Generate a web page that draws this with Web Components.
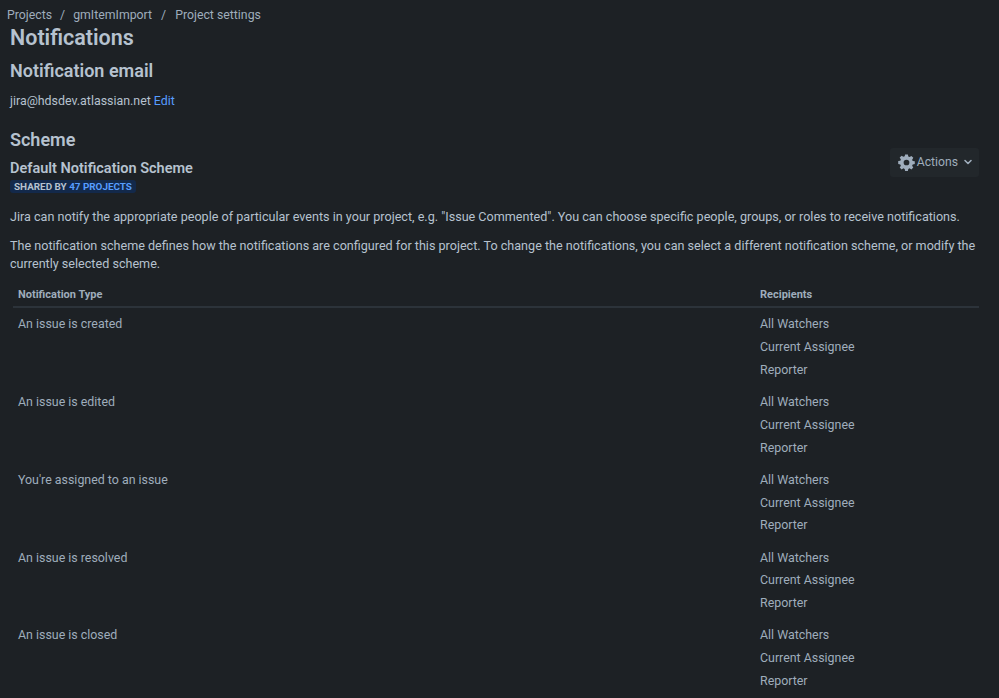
<!DOCTYPE html>
<html><head><meta charset="utf-8"><style>
html,body{margin:0;padding:0;background:#1d2125;color:#b6c2cf;font:12.6px/18px Roboto,sans-serif;height:698px;overflow:hidden}
</style></head><body>
<template id="t-bc"><style>
:host{display:flex;align-items:center;height:19px;padding:5px 0 0 7px;font-size:12.3px;color:#9fadbc}
</style><slot></slot></template>
<template id="t-head"><style>
:host{display:flex;justify-content:space-between;align-items:flex-start}
</style><div><slot></slot></div><slot name="side"></slot></template>
<template id="t-badge"><style>
:host{display:flex;width:fit-content;align-items:center;height:13px;margin-top:1px;padding:0 4px;background:#13294b;border-radius:3px;font-size:9.9px;line-height:13px;font-weight:700;color:#b6c2cf;text-transform:uppercase}
</style><slot></slot></template>
<template id="t-btn"><style>
:host{display:inline-flex;align-items:center;height:29px;box-sizing:border-box;padding:0 5px 0 8px;background:#22272b;border-radius:3px;color:#9fadbc;font-size:12.2px;gap:2px}
svg{display:block}
</style><svg width="17" height="17" viewBox="0 0 16 16"><path fill="#9fadbc" fill-rule="evenodd" d="M6.7.4h2.6l.4 2 1.2.5 1.7-1.1 1.8 1.8-1.1 1.7.5 1.2 2 .4v2.6l-2 .4-.5 1.2 1.1 1.7-1.8 1.8-1.7-1.1-1.2.5-.4 2H6.7l-.4-2-1.2-.5-1.7 1.1-1.8-1.8 1.1-1.7-.5-1.2-2-.4V6.7l2-.4.5-1.2-1.1-1.7 1.8-1.8 1.7 1.1 1.2-.5zM8 5.3a2.7 2.7 0 1 0 0 5.4 2.7 2.7 0 0 0 0-5.4z"/></svg><slot></slot><svg width="12" height="12" viewBox="0 0 12 12" style="margin-left:2px"><path d="M3 4.5 6 7.5 9 4.5" fill="none" stroke="#9fadbc" stroke-width="1.6" stroke-linecap="round" stroke-linejoin="round"/></svg></template>
<template id="t-table"><style>
:host{display:block;margin:11px 20px 0 13px}
.h{display:grid;grid-template-columns:742px 1fr;height:24px;align-items:center;border-bottom:2px solid #2c333a;padding-left:5px;font-size:11px;font-weight:700;color:#9fadbc;box-sizing:border-box}
</style><div class="h"><div>Notification Type</div><div>Recipients</div></div><slot></slot></template>
<template id="t-row"><style>
:host{display:grid;grid-template-columns:742px 1fr;padding:5.3px 0 0 5px;height:77.75px;box-sizing:border-box;line-height:22.75px;color:#9fadbc;font-size:12.4px}
</style><div><slot name="type"></slot></div><div><div>All Watchers</div><div>Current Assignee</div><div>Reporter</div></div></template>
<app-breadcrumbs>Projects<span style="margin:0 8px">/</span>gmItemImport<span style="margin:0 9px">/</span>Project settings</app-breadcrumbs>
<app-page>
<div style="padding:0 20px 0 10px">
<h1 style="font-size:21.5px;line-height:28px;margin:0;font-weight:600;color:#b6c2cf">Notifications</h1>
<h2 style="font-size:18px;line-height:24px;margin:7px 0 0;font-weight:600;color:#b6c2cf">Notification email</h2>
<p style="margin:8px 0 0;line-height:20px;font-size:12.4px;color:#b6c2cf">jira@hdsdev.atlassian.net <a style="color:#579dff">Edit</a></p>
<h2 style="font-size:18px;line-height:24px;margin:16.5px 0 0;font-weight:600;color:#b6c2cf">Scheme</h2>
<app-head>
<div>
<h3 style="font-size:14.5px;line-height:20px;margin:7px 0 0;font-weight:600;color:#b6c2cf">Default Notification Scheme</h3>
<app-badge>Shared by&nbsp;<span style="color:#579dff">47 projects</span></app-badge>
</div>
<app-button slot="side" style="margin-top:-4px">Actions</app-button>
</app-head>
<p style="margin:15.5px 0 0;color:#b6c2cf">Jira can notify the appropriate people of particular events in your project, e.g. "Issue Commented". You can choose specific people, groups, or roles to receive notifications.</p>
<p style="margin:11px 0 0;color:#b6c2cf">The notification scheme defines how the notifications are configured for this project. To change the notifications, you can select a different notification scheme, or modify the currently selected scheme.</p>
</div>
<app-table>
<app-row><span slot="type">An issue is created</span></app-row>
<app-row><span slot="type">An issue is edited</span></app-row>
<app-row><span slot="type">You're assigned to an issue</span></app-row>
<app-row><span slot="type">An issue is resolved</span></app-row>
<app-row><span slot="type">An issue is closed</span></app-row>
</app-table>
</app-page>
<script>
const reg=(n,t)=>customElements.define(n,class extends HTMLElement{constructor(){super();this.attachShadow({mode:"open"});if(t)this.shadowRoot.appendChild(document.getElementById(t).content.cloneNode(true));else this.shadowRoot.innerHTML="<style>:host{display:block}</style><slot></slot>"}});
reg("app-breadcrumbs","t-bc");reg("app-page");reg("app-head","t-head");reg("app-badge","t-badge");reg("app-button","t-btn");reg("app-table","t-table");reg("app-row","t-row");
</script>
</body></html>
